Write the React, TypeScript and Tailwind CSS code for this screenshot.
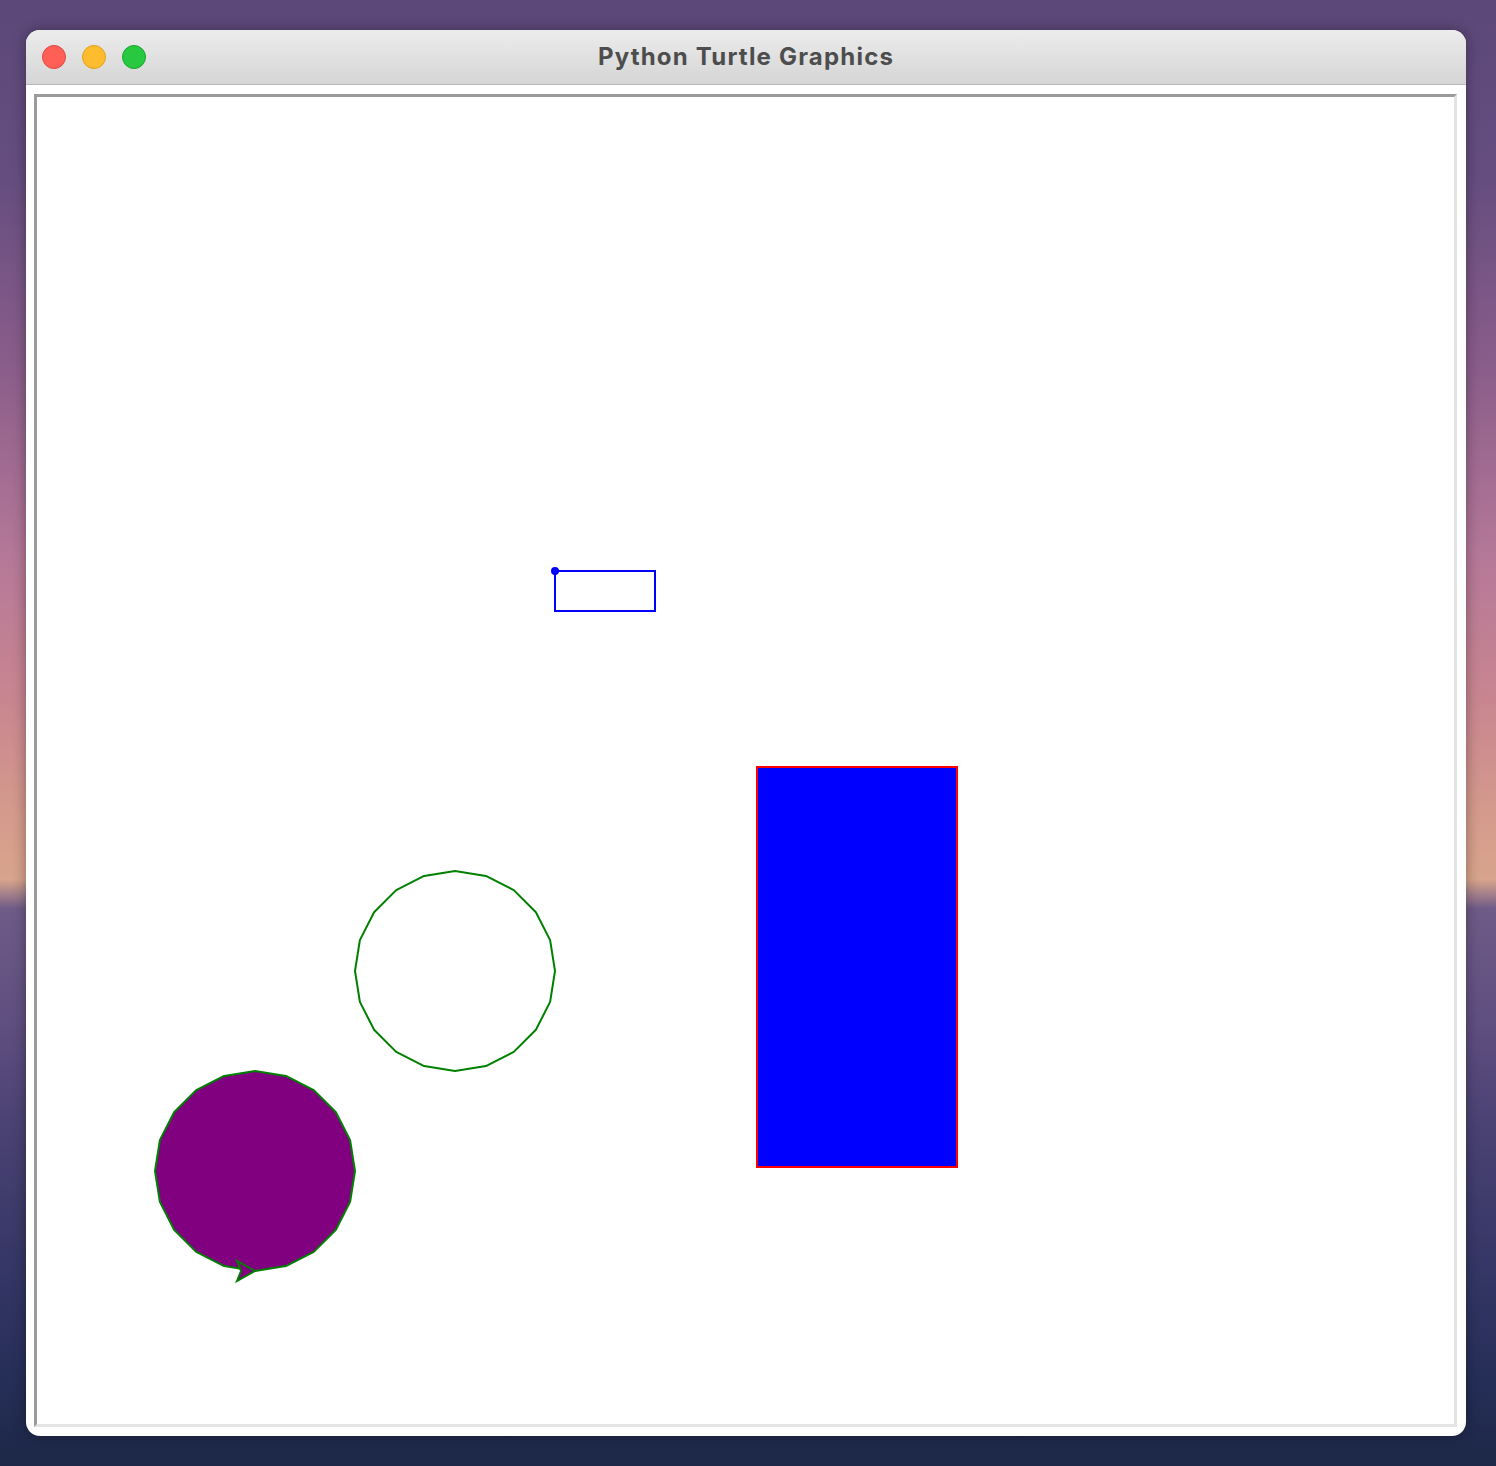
import React from 'react';

// turtle-style polygon circle: vertices on radius r around (cx, cy)
function circlePoints(cx: number, cy: number, r: number, steps: number) {
    const pts: string[] = [];
    for (let i = 0; i < steps; i++) {
        const a = (i * 2 * Math.PI) / steps;
        pts.push(`${(cx + r * Math.cos(a)).toFixed(2)},${(cy + r * Math.sin(a)).toFixed(2)}`);
    }
    return pts.join(' ');
}

function TrafficLights() {
    return (
        <div className="flex items-center gap-4">
            <span className="size-6 rounded-full border border-[#e2463f] bg-[#ff5f57]" />
            <span className="size-6 rounded-full border border-[#e1a116] bg-[#febc2e]" />
            <span className="size-6 rounded-full border border-[#17a52c] bg-[#28c840]" />
        </div>
    );
}

function TurtleCanvas() {
    return (
        <svg
            width={1417}
            height={1327}
            viewBox="37 97 1417 1327"
            className="block">
            {/* small blue outline rectangle + dot */}
            <rect x={555} y={571} width={100} height={40} fill="none" stroke="#0000ff" strokeWidth={2} />
            <circle cx={555} cy={571} r={4} fill="#0000ff" />

            {/* filled blue rectangle, red pen */}
            <rect x={757} y={767} width={200} height={400} fill="#0000ff" stroke="#ff0000" strokeWidth={2} />

            {/* green outline circle */}
            <polygon points={circlePoints(455, 971, 100, 20)} fill="none" stroke="#008000" strokeWidth={2} strokeLinejoin="round" />

            {/* purple filled circle */}
            <polygon points={circlePoints(255, 1171, 100, 20)} fill="#800080" stroke="#008000" strokeWidth={2} strokeLinejoin="round" />

            {/* turtle arrow */}
            <polygon points="255,1271 237,1261 241,1271 237,1281" fill="#800080" stroke="#008000" strokeWidth={2} strokeLinejoin="miter" />
        </svg>
    );
}

export default function App() {
    return (
        <div className="h-[1466px] w-full overflow-hidden bg-[linear-gradient(180deg,#5c4879_0%,#654d80_12%,#8a5d8a_25%,#b57898_38%,#c98690_48%,#d59c8c_56%,#d8a48c_60%,#6f5b88_62%,#5f4e80_70%,#4a4273_77%,#363766_86%,#262f58_94%,#1d2747_100%)] pl-[26px] pt-[30px] font-['Inter','Liberation_Sans',sans-serif]">
            <div className="flex h-[1406px] w-[1440px] flex-col overflow-hidden rounded-[14px] bg-white shadow-[0_0_14px_rgba(0,0,0,0.35)]">
                {/* Title bar */}
                <div className="relative flex h-[55px] shrink-0 items-center border-b border-[#b9b9b9] bg-[linear-gradient(180deg,#ececec,#d5d5d5)] pl-4">
                    <TrafficLights />
                    <div className="absolute inset-x-0 top-0 flex h-full items-center justify-center text-[24px] font-bold tracking-[1.2px] text-[#4d4d4d]">
                        Python Turtle Graphics
                    </div>
                </div>

                {/* Canvas area */}
                <div className="flex flex-1 items-start px-[8px] pt-[9px]">
                    <div className="border-[3px] border-b-[#e4e4e4] border-l-[#9b9b9b] border-r-[#e4e4e4] border-t-[#9b9b9b] bg-white">
                        <TurtleCanvas />
                    </div>
                </div>
            </div>
        </div>
    );
}
